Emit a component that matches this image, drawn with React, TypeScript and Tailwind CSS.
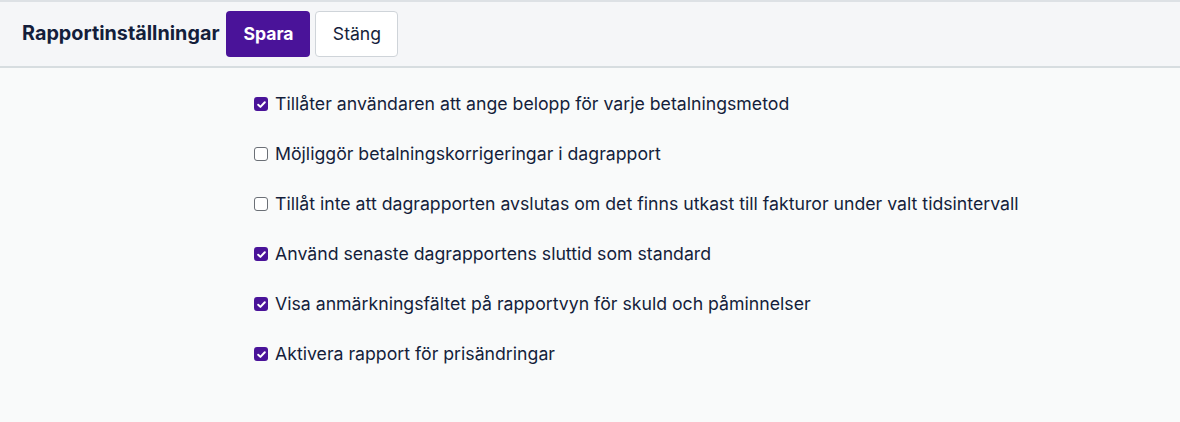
import React from 'react';

const options = [
  { label: 'Tillåter användaren att ange belopp för varje betalningsmetod', checked: true },
  { label: 'Möjliggör betalningskorrigeringar i dagrapport', checked: false },
  { label: 'Tillåt inte att dagrapporten avslutas om det finns utkast till fakturor under valt tidsintervall', checked: false },
  { label: 'Använd senaste dagrapportens sluttid som standard', checked: true },
  { label: 'Visa anmärkningsfältet på rapportvyn för skuld och påminnelser', checked: true },
  { label: 'Aktivera rapport för prisändringar', checked: true },
];

const Checkbox: React.FC<{ checked: boolean }> = ({ checked }) =>
  checked ? (
    <span className="flex h-[14px] w-[14px] shrink-0 items-center justify-center rounded-[3px] bg-[#4a1399]">
      <svg viewBox="0 0 12 12" className="h-[11px] w-[11px]" fill="none" stroke="white" strokeWidth="2.2" strokeLinecap="round" strokeLinejoin="round">
        <path d="M2.4 6.3l2.4 2.3 4.8-5.1" />
      </svg>
    </span>
  ) : (
    <span className="h-[14px] w-[14px] shrink-0 rounded-[3px] border border-[#6b6f76] bg-white" />
  );

export default function App() {
  return (
    <div className="min-h-[422px] w-full bg-[#f9fafa] font-['Inter',sans-serif] text-[#141e3b]">
      <header className="flex h-[68px] items-center gap-[5px] border-t-2 border-b-2 border-t-[#dde1e5] border-b-[#d7dde0] bg-[#f5f6f8] pl-[22px]">
        <h1 className="mr-[2px] text-[19.8px] font-bold">Rapportinställningar</h1>
        <button className="h-[46px] w-[84px] rounded-[4px] bg-[#4a1399] text-[17.6px] font-bold text-white">Spara</button>
        <button className="h-[46px] w-[83px] rounded-[4px] border border-[#cfd4d9] bg-white text-[17.6px] text-[#141e3b]">Stäng</button>
      </header>
      <div className="flex flex-col gap-[28px] pl-[254px] pt-[25px]">
        {options.map((o) => (
          <label key={o.label} className="flex h-[22px] items-center gap-[7px] text-[17.7px]">
            <Checkbox checked={o.checked} />
            <span>{o.label}</span>
          </label>
        ))}
      </div>
    </div>
  );
}
